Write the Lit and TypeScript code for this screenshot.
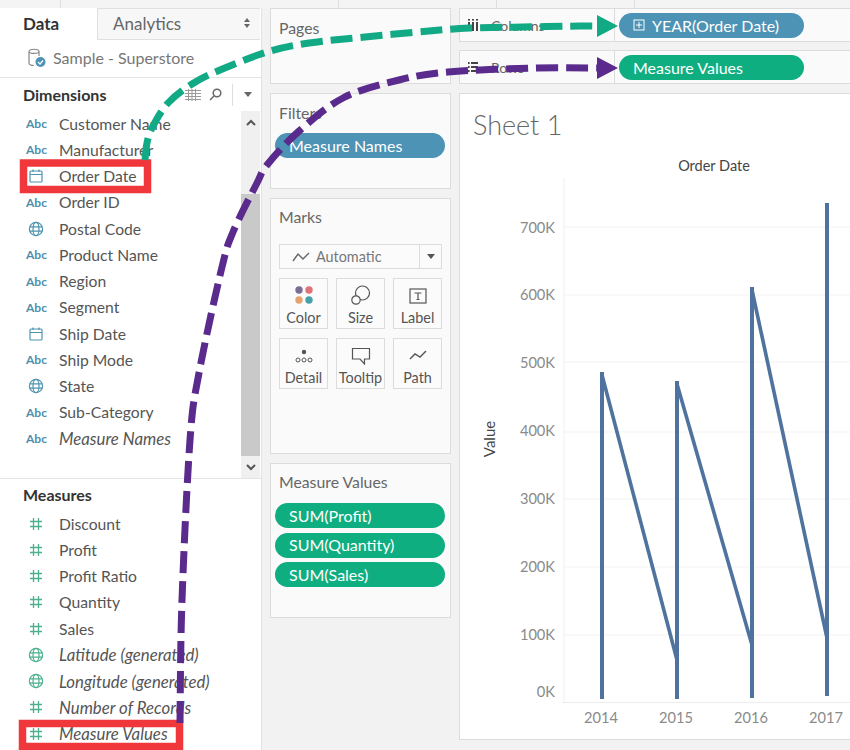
import { LitElement, html, css, svg } from "lit";
import { customElement } from "lit/decorators.js";

type Kind = "abc" | "cal" | "globe" | "hash" | "gglobe";
const dims: [Kind, string, boolean?][] = [
  ["abc", "Customer Name"], ["abc", "Manufacturer"], ["cal", "Order Date"], ["abc", "Order ID"],
  ["globe", "Postal Code"], ["abc", "Product Name"], ["abc", "Region"], ["abc", "Segment"],
  ["cal", "Ship Date"], ["abc", "Ship Mode"], ["globe", "State"], ["abc", "Sub-Category"],
  ["abc", "Measure Names", true],
];
const meas: [Kind, string, boolean?][] = [
  ["hash", "Discount"], ["hash", "Profit"], ["hash", "Profit Ratio"], ["hash", "Quantity"], ["hash", "Sales"],
  ["gglobe", "Latitude (generated)", true], ["gglobe", "Longitude (generated)", true],
  ["hash", "Number of Records", true], ["hash", "Measure Values", true],
];

function smooth(p: number[][]): string {
  let d = `M${p[0][0]} ${p[0][1]}`;
  for (let i = 0; i < p.length - 1; i++) {
    const a = p[Math.max(i - 1, 0)], b = p[i], c = p[i + 1], e = p[Math.min(i + 2, p.length - 1)];
    const c1 = [b[0] + (c[0] - a[0]) / 6, b[1] + (c[1] - a[1]) / 6];
    const c2 = [c[0] - (e[0] - b[0]) / 6, c[1] - (e[1] - b[1]) / 6];
    d += ` C${c1[0].toFixed(1)} ${c1[1].toFixed(1)} ${c2[0].toFixed(1)} ${c2[1].toFixed(1)} ${c[0]} ${c[1]}`;
  }
  return d;
}
const greenPts = [[145,160],[147,143],[152,128],[168,103],[192,84],[220,70],[267,52],[309,43],[365,37],[429,31],[470,28],[523,27],[580,26],[598,26]];
const purplePts = [[180,723],[182,600],[190,440],[199,373],[222,267],[233,232],[257,183],[267,165],[298,132],[343,98],[399,80],[448,72],[534,68],[598,68]];

function fieldIcon(k: Kind) {
  if (k === "abc") return html`<span class="abc">Abc</span>`;
  if (k === "cal") return html`<svg width="16" height="16" viewBox="0 0 16 16" fill="none" stroke="#4d94b0" stroke-width="1.2"><rect x="2" y="3" width="12" height="11" rx="1"/><path d="M2 6.5H14M5 1.5V4M11 1.5V4"/></svg>`;
  if (k === "hash") return html`<svg width="16" height="16" viewBox="0 0 16 16" fill="none" stroke="#4cb08f" stroke-width="1.3"><path d="M5.5 2V14M10.5 2V14M2 5.5H14M2 10.5H14"/></svg>`;
  const c = k === "globe" ? "#4d94b0" : "#4cb08f";
  return html`<svg width="16" height="16" viewBox="0 0 16 16" fill="none" stroke="${c}" stroke-width="1.2"><circle cx="8" cy="8" r="6.6"/><ellipse cx="8" cy="8" rx="3" ry="6.6"/><path d="M1.6 5.8H14.4M1.6 10.2H14.4"/></svg>`;
}

@customElement("app-root")
export class AppRoot extends LitElement {
  static styles = css`
    :host { display: block; position: relative; width: 850px; height: 750px; overflow: hidden; background: #f2f2f2; font-family: Lato, "Open Sans", sans-serif; color: #555; }
    .strip { display: flex; height: 8px; background: #f4f4f4; }
    .strip span { border-right: 1px solid #dedede; }
    .s1 { width: 60px; } .s2 { width: 277px; } .s3 { width: 157px; } .s4 { width: 137px; }
    .main { display: grid; grid-template-columns: 262px 181px 391px; column-gap: 8px; height: 742px; }
    .left { background: #fff; border-right: 1px solid #e2e2e2; box-sizing: border-box; display: flex; flex-direction: column; }
    .tabs { display: flex; height: 32px; }
    .tab-data { width: 97px; box-sizing: border-box; padding: 5px 0 0 23px; font-size: 17px; font-weight: 700; color: #333; }
    .tab-an { flex: 1; margin-right: 1px; display: flex; align-items: center; justify-content: space-between; background: #f7f7f7; border: 1px solid #e0e0e0; border-right: none; padding: 0 9px 2px 15px; font-size: 17px; color: #666; }
    .source { height: 38px; box-sizing: border-box; display: flex; align-items: center; gap: 6px; padding: 0 0 2px 27px; border-bottom: 1px solid #e4e4e4; font-size: 16px; color: #777; }
    .head { display: flex; align-items: center; padding-left: 23px; font-size: 16px; font-weight: 700; color: #333; }
    .dhead { height: 33px; box-sizing: border-box; }
    .dhead .tools { margin-left: auto; display: flex; align-items: center; gap: 8px; padding-right: 8px; }
    .sep { width: 1px; height: 22px; background: #ddd; margin: 0 2px; }
    .dbody { height: 367px; display: flex; border-bottom: 1px solid #e4e4e4; }
    .rows { flex: 1; }
    .mrows { margin-top: 2px; }
    .row { height: 26.25px; box-sizing: border-box; padding-bottom: 1px; display: flex; align-items: center; font-size: 15.7px; color: #555; }
    .row.it { font-style: italic; font-size: 16.8px; }
    .ic { width: 59px; padding-left: 26px; box-sizing: border-box; display: flex; justify-content: flex-start; align-items: center; }
    .ic svg { margin-left: 2px; }
    .abc { font-size: 12px; font-style: normal; font-weight: 700; color: #4d90ad; }
    .scroll { width: 19px; margin-right: 1px; display: flex; flex-direction: column; background: #f0f0f0; }
    .arrow { height: 22px; display: flex; align-items: center; justify-content: center; }
    .track { flex: 1; }
    .thumb { height: 262px; background: #c9c9c9; }
    .mhead { height: 30px; }
    .mid { display: flex; flex-direction: column; gap: 9px; }
    .card { background: #fafafa; border: 1px solid #dcdcdc; box-sizing: border-box; padding: 9px 8px 0; font-size: 15.8px; color: #666; }
    .pages { height: 76px; }
    .filters { height: 96px; }
    .marks { height: 256px; padding-top: 8px; }
    .mv { height: 155px; padding-top: 8px; }
    .pills { display: flex; flex-direction: column; gap: 4.5px; margin: 11px -3px 0 -4px; }
    .mv .pills { margin-top: 12px; }
    .pill { height: 25px; border-radius: 13px; color: #fff; font-size: 16px; display: flex; align-items: center; padding: 0 0 1px 14px; box-sizing: border-box; }
    .blue { background: #4d93b5; }
    .green { background: #0fae80; }
    .auto { margin-top: 18px; height: 25px; box-sizing: border-box; display: flex; border: 1px solid #dcdcdc; background: #fbfbfb; font-size: 14.4px; color: #777; }
    .auto-l { flex: 1; display: flex; align-items: center; gap: 6px; padding-left: 12px; }
    .auto-r { width: 21px; border-left: 1px solid #dcdcdc; display: flex; align-items: center; justify-content: center; }
    .btns { display: grid; grid-template-columns: repeat(3, 1fr); gap: 9px 8px; margin-top: 9px; }
    .btn { height: 51px; border: 1px solid #dcdcdc; background: #fbfbfb; box-sizing: border-box; display: flex; flex-direction: column; align-items: center; justify-content: flex-end; padding-bottom: 2px; font-size: 14.4px; color: #555; }
    .btn svg { margin-bottom: 4px; }
    .right { display: flex; flex-direction: column; gap: 8px; }
    .shelf { height: 34px; box-sizing: border-box; background: #fafafa; border: 1px solid #dcdcdc; border-right: none; display: flex; align-items: stretch; font-size: 14px; color: #666; }
    .sl { width: 155px; border-right: 1px solid #dcdcdc; display: flex; align-items: center; gap: 13px; padding-left: 8px; box-sizing: border-box; }
    .sr { padding: 4px 0 0 4px; }
    .sr .pill { width: 185px; }
    .pill svg { margin-right: 7px; }
    .viz { height: 647px; margin-top: 1px; background: #fff; border: 1px solid #dcdcdc; border-right: none; box-sizing: border-box; display: flex; flex-direction: column; }
    .title { height: 60px; padding: 14px 0 0 13px; box-sizing: border-box; font-size: 27px; font-weight: 300; color: #666; }
    .axis-title { height: 24px; line-height: 24px; padding-left: 118px; text-align: center; font-size: 14.5px; color: #444; }
    .chart { display: block; }
    .overlay { position: absolute; left: 0; top: 0; pointer-events: none; }
  `;

  private tri(c = "#666") {
    return html`<svg width="10" height="6" viewBox="0 0 10 6"><path d="M1 0H9L5 5Z" fill="${c}"/></svg>`;
  }

  private fields(list: [Kind, string, boolean?][]) {
    return list.map(([k, t, it]) => html`<div class="row ${it ? "it" : ""}"><span class="ic">${fieldIcon(k)}</span><span>${t}</span></div>`);
  }

  private chart() {
    const grid: [string, number, number][] = [["700K",227,233],["600K",295,300],["500K",362,368],["400K",432,436],["300K",499,504],["200K",567,572],["100K",635,640]];
    const lab = "font-family:Lato,sans-serif;font-size:14.6px;fill:#8a8a8a";
    return html`<svg class="chart" width="390" height="561" viewBox="460 178 390 561">
      ${grid.map(([t, y, ty]) => svg`<line x1="564" x2="850" y1="${y}" y2="${y}" stroke="#f3f3f3"/>
        <text x="555" y="${ty}" text-anchor="end" style="${lab}">${t}</text>`)}
      <text x="555" y="697" text-anchor="end" style="${lab}">0K</text>
      <line x1="564" x2="564" y1="178" y2="703" stroke="#f0f0f0"/>
      <line x1="562" x2="850" y1="702.5" y2="702.5" stroke="#ececec"/>
      ${[["2014",601],["2015",676],["2016",751],["2017",826]].map(([t, x]) => svg`<text x="${x}" y="723" text-anchor="middle" style="${lab}">${t}</text>`)}
      <text transform="translate(495 439) rotate(-90)" text-anchor="middle" style="font-family:Lato,sans-serif;font-size:15px;fill:#444">Value</text>
      <g fill="none" stroke="#4f739e" stroke-linejoin="round">
        <path d="M602 699V372" stroke-width="4"/><path d="M602 375L677 660" stroke-width="3.6"/>
        <path d="M677 699V381" stroke-width="4"/><path d="M677 384L752 645" stroke-width="3.6"/>
        <path d="M752 698V287" stroke-width="4"/><path d="M752 290L827 638" stroke-width="3.6"/>
        <path d="M827 696V203" stroke-width="4"/>
      </g>
    </svg>`;
  }

  render() {
    return html`
      <div class="strip"><span class="s1"></span><span class="s2"></span><span class="s3"></span><span class="s4"></span></div>
      <div class="main">
        <div class="left">
          <div class="tabs">
            <div class="tab-data">Data</div>
            <div class="tab-an"><span>Analytics</span>
              <svg width="8" height="12" viewBox="0 0 8 12"><path d="M4 1L7 5H1ZM4 11L1 7H7Z" fill="#666"/></svg></div>
          </div>
          <div class="source">
            <svg width="20" height="22" viewBox="0 0 20 22" fill="none"><path d="M2 4.5C2 1.5 12 1.5 12 4.5V9M2 4.5C2 7 12 7 12 4.5M2 4.5V16C2 17.5 4 18.5 7 18.5" stroke="#888" stroke-width="1.2"/><circle cx="13.5" cy="15" r="5" fill="#4d93b5"/><path d="M11 15L13 17L16 13.5" stroke="#fff" stroke-width="1.2"/></svg>
            <span>Sample - Superstore</span>
          </div>
          <div class="head dhead"><span>Dimensions</span>
            <div class="tools">
              <svg width="16" height="12" viewBox="0 0 16 12" stroke="#999" fill="none"><path d="M0 1.5H16M0 4.5H16M0 7.5H16M0 10.5H16M3.5 0V12M7 0V12M10.5 0V12"/></svg>
              <svg width="13" height="13" viewBox="0 0 13 13" fill="none" stroke="#666" stroke-width="1.5"><circle cx="8" cy="5" r="3.8"/><path d="M5 8L1 12"/></svg>
              <span class="sep"></span>
              ${this.tri()}
            </div>
          </div>
          <div class="dbody">
            <div class="rows">${this.fields(dims)}</div>
            <div class="scroll">
              <div class="arrow"><svg width="10" height="7" viewBox="0 0 10 7" fill="none" stroke="#555" stroke-width="2"><path d="M1 6L5 2L9 6"/></svg></div>
              <div class="track"></div>
              <div class="thumb"></div>
              <div class="arrow"><svg width="10" height="7" viewBox="0 0 10 7" fill="none" stroke="#555" stroke-width="2"><path d="M1 1L5 5L9 1"/></svg></div>
            </div>
          </div>
          <div class="head mhead">Measures</div>
          <div class="rows mrows">${this.fields(meas)}</div>
        </div>

        <div class="mid">
          <div class="card pages">Pages</div>
          <div class="card filters">Filters
            <div class="pills"><div class="pill blue">Measure Names</div></div>
          </div>
          <div class="card marks">Marks
            <div class="auto">
              <div class="auto-l"><svg width="18" height="12" viewBox="0 0 18 12" fill="none" stroke="#666" stroke-width="1.4"><path d="M1 10L6 3L11 8L17 2"/></svg><span>Automatic</span></div>
              <div class="auto-r">${this.tri("#555")}</div>
            </div>
            <div class="btns">
              <div class="btn"><svg width="20" height="20" viewBox="0 0 20 20"><circle cx="5" cy="5" r="3.7" fill="#7a6e96"/><circle cx="15" cy="5" r="3.7" fill="#e0727a"/><circle cx="5" cy="15" r="3.7" fill="#e6a36f"/><circle cx="15" cy="15" r="3.7" fill="#45a0a8"/></svg>Color</div>
              <div class="btn"><svg width="20" height="20" viewBox="0 0 20 20" fill="none" stroke="#555" stroke-width="1.2"><circle cx="11.5" cy="8" r="7"/><circle cx="5" cy="15" r="4.2" fill="#fbfbfb"/></svg>Size</div>
              <div class="btn"><svg width="18" height="18" viewBox="0 0 18 18" fill="none" stroke="#555" stroke-width="1.2"><rect x="1" y="2" width="16" height="14"/><path d="M5.5 6H12.5M9 6V12.5M7.5 12.5H10.5"/></svg>Label</div>
              <div class="btn"><svg width="18" height="18" viewBox="0 0 18 18" fill="none" stroke="#555" stroke-width="1"><circle cx="9" cy="5" r="2.2" fill="#555" stroke="none"/><circle cx="3" cy="13" r="2"/><circle cx="9" cy="13" r="2"/><circle cx="15" cy="13" r="2"/></svg>Detail</div>
              <div class="btn"><svg width="20" height="18" viewBox="0 0 20 18" fill="none" stroke="#555" stroke-width="1.2"><path d="M1.5 1.5H18.5V12H13.5V17L9 12H1.5Z"/></svg>Tooltip</div>
              <div class="btn"><svg width="18" height="18" viewBox="0 0 18 18" fill="none" stroke="#555" stroke-width="1.4"><path d="M1 12L6 7L11 10L17 4"/></svg>Path</div>
            </div>
          </div>
          <div class="card mv">Measure Values
            <div class="pills">
              <div class="pill green">SUM(Profit)</div>
              <div class="pill green">SUM(Quantity)</div>
              <div class="pill green">SUM(Sales)</div>
            </div>
          </div>
        </div>

        <div class="right">
          <div class="shelf">
            <div class="sl"><svg width="10" height="12" viewBox="0 0 10 12" fill="#444"><rect x="0" y="3" width="2" height="9"/><rect x="4" y="3" width="2" height="9"/><rect x="8" y="3" width="2" height="9"/><rect x="0" y="0" width="2" height="1.6"/><rect x="4" y="0" width="2" height="1.6"/><rect x="8" y="0" width="2" height="1.6"/></svg><span>Columns</span></div>
            <div class="sr"><div class="pill blue"><svg width="12" height="12" viewBox="0 0 12 12" fill="none" stroke="#fff"><rect x="1" y="1" width="10" height="10"/><path d="M3 6H9M6 3V9"/></svg>YEAR(Order Date)</div></div>
          </div>
          <div class="shelf">
            <div class="sl"><svg width="10" height="12" viewBox="0 0 10 12" fill="#444"><rect x="3" y="1" width="7" height="2"/><rect x="3" y="5" width="7" height="2"/><rect x="3" y="9" width="7" height="2"/><rect x="0" y="1" width="1.6" height="2"/><rect x="0" y="5" width="1.6" height="2"/><rect x="0" y="9" width="1.6" height="2"/></svg><span>Rows</span></div>
            <div class="sr"><div class="pill green">Measure Values</div></div>
          </div>
          <div class="viz">
            <div class="title">Sheet 1</div>
            <div class="axis-title">Order Date</div>
            ${this.chart()}
          </div>
        </div>
      </div>
      <svg class="overlay" width="850" height="750" viewBox="0 0 850 750" fill="none">
        <rect x="23.5" y="163" width="124" height="26.5" stroke="#f0383c" stroke-width="7.5"/>
        <rect x="22.5" y="723.5" width="157" height="23" stroke="#f0383c" stroke-width="7.5"/>
        <path d="${smooth(greenPts)}" stroke="#12a985" stroke-width="7" stroke-dasharray="22 8"/>
        <polygon points="597,15 597,37 618,26" fill="#12a985"/>
        <path d="${smooth(purplePts)}" stroke="#5a2a8c" stroke-width="7" stroke-dasharray="22 8"/>
        <polygon points="597,57 597,79 618,68" fill="#5a2a8c"/>
      </svg>
    `;
  }
}
